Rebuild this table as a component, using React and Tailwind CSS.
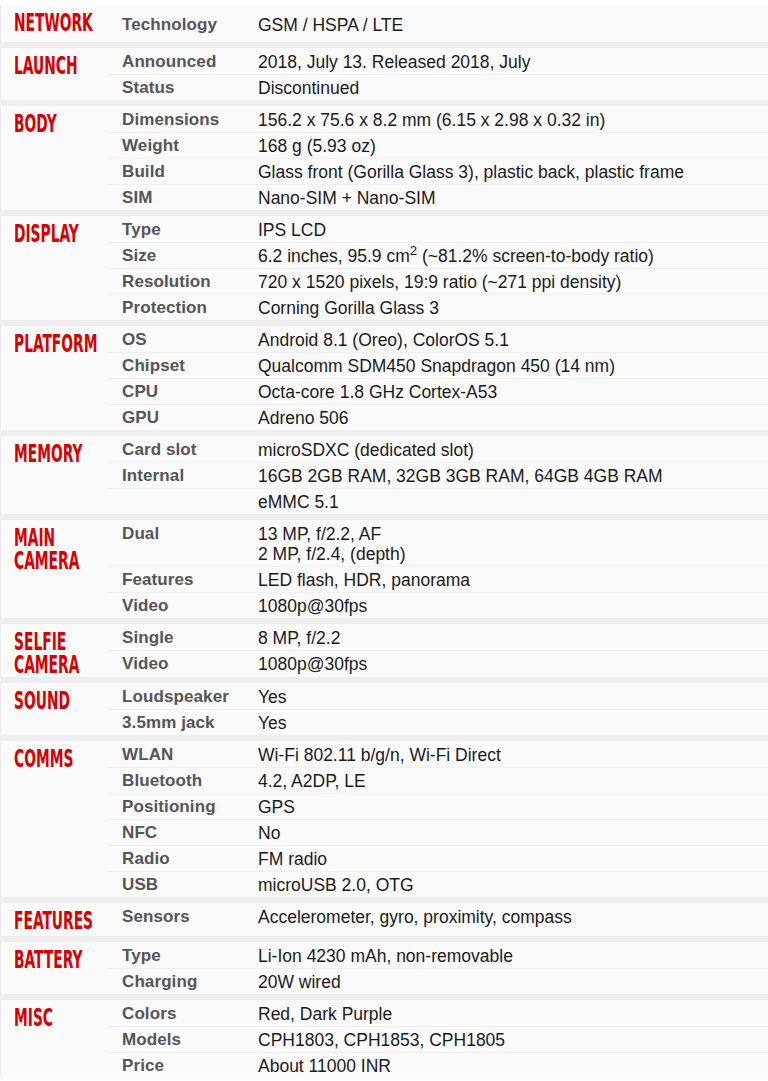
import React from 'react';

const specs = [
  { title: ['NETWORK'], tall: 'network', rows: [['Technology', 'GSM / HSPA / LTE']] },
  {
    title: ['LAUNCH'],
    rows: [
      ['Announced', '2018, July 13. Released 2018, July'],
      ['Status', 'Discontinued'],
    ],
  },
  {
    title: ['BODY'],
    rows: [
      ['Dimensions', '156.2 x 75.6 x 8.2 mm (6.15 x 2.98 x 0.32 in)'],
      ['Weight', '168 g (5.93 oz)'],
      ['Build', 'Glass front (Gorilla Glass 3), plastic back, plastic frame'],
      ['SIM', 'Nano-SIM + Nano-SIM'],
    ],
  },
  {
    title: ['DISPLAY'],
    rows: [
      ['Type', 'IPS LCD'],
      [
        'Size',
        <>
          6.2 inches, 95.9 cm<sup>2</sup> (~81.2% screen-to-body ratio)
        </>,
      ],
      ['Resolution', '720 x 1520 pixels, 19:9 ratio (~271 ppi density)'],
      ['Protection', 'Corning Gorilla Glass 3'],
    ],
  },
  {
    title: ['PLATFORM'],
    rows: [
      ['OS', 'Android 8.1 (Oreo), ColorOS 5.1'],
      ['Chipset', 'Qualcomm SDM450 Snapdragon 450 (14 nm)'],
      ['CPU', 'Octa-core 1.8 GHz Cortex-A53'],
      ['GPU', 'Adreno 506'],
    ],
  },
  {
    title: ['MEMORY'],
    rows: [
      ['Card slot', 'microSDXC (dedicated slot)'],
      ['Internal', '16GB 2GB RAM, 32GB 3GB RAM, 64GB 4GB RAM'],
      ['', 'eMMC 5.1'],
    ],
  },
  {
    title: ['MAIN', 'CAMERA'],
    rows: [
      ['Dual', ['13 MP, f/2.2, AF', '2 MP, f/2.4, (depth)']],
      ['Features', 'LED flash, HDR, panorama'],
      ['Video', '1080p@30fps'],
    ],
  },
  {
    title: ['SELFIE', 'CAMERA'],
    rows: [
      ['Single', '8 MP, f/2.2'],
      ['Video', '1080p@30fps'],
    ],
  },
  {
    title: ['SOUND'],
    rows: [
      ['Loudspeaker', 'Yes'],
      ['3.5mm jack', 'Yes'],
    ],
  },
  {
    title: ['COMMS'],
    rows: [
      ['WLAN', 'Wi-Fi 802.11 b/g/n, Wi-Fi Direct'],
      ['Bluetooth', '4.2, A2DP, LE'],
      ['Positioning', 'GPS'],
      ['NFC', 'No'],
      ['Radio', 'FM radio'],
      ['USB', 'microUSB 2.0, OTG'],
    ],
  },
  { title: ['FEATURES'], tall: 'features', rows: [['Sensors', 'Accelerometer, gyro, proximity, compass']] },
  {
    title: ['BATTERY'],
    rows: [
      ['Type', 'Li-Ion 4230 mAh, non-removable'],
      ['Charging', '20W wired'],
    ],
  },
  {
    title: ['MISC'],
    rows: [
      ['Colors', 'Red, Dark Purple'],
      ['Models', 'CPH1803, CPH1853, CPH1805'],
      ['Price', 'About 11000 INR'],
    ],
  },
];

const SpecSection = ({ section }) => {
  const network = section.tall === 'network';
  const features = section.tall === 'features';
  return (
    <div
      className={`flex bg-[#fafafa] ${network ? 'h-[37px] items-center' : ''} ${features ? 'h-[33px]' : ''}`}
    >
      {/* section title, condensed red */}
      <div
        className={`w-[107px] shrink-0 pl-[13px] ${network ? '' : 'pt-[7px]'} text-[#d50000] text-[24px] leading-[23px] font-bold [font-family:'DejaVu_Sans_Condensed','DejaVu_Sans',sans-serif]`}
      >
        {section.title.map((t) => (
          <div key={t} className="scale-x-[0.64] origin-left whitespace-nowrap">
            {t}
          </div>
        ))}
      </div>
      <div className="flex-1 flex flex-col">
        {section.rows.map(([label, value], i) => (
          <div
            key={i}
            className={`flex leading-[20px] pb-[2px] ${i > 0 ? 'border-t border-[#f0f0f0] pt-[3px]' : 'pt-[4px]'}`}
          >
            <div className="w-[150px] shrink-0 pl-[14px] text-[#555] font-bold text-[17px] tracking-[0.1px]">
              {label}
            </div>
            <div className="flex-1 text-[#1a1a1a] text-[17.5px]">
              {Array.isArray(value) ? value.map((v) => <div key={v}>{v}</div>) : value}
            </div>
          </div>
        ))}
      </div>
    </div>
  );
};

const App = () => {
  return (
    <div className="min-h-screen bg-white pt-[5px] [font-family:'Liberation_Sans',Arial,sans-serif]">
      <div className="flex flex-col gap-[6px] bg-[#eee] border-l border-[#eee]">
        {specs.map((s) => (
          <SpecSection key={s.title.join(' ')} section={s} />
        ))}
      </div>
    </div>
  );
};

export default App;
